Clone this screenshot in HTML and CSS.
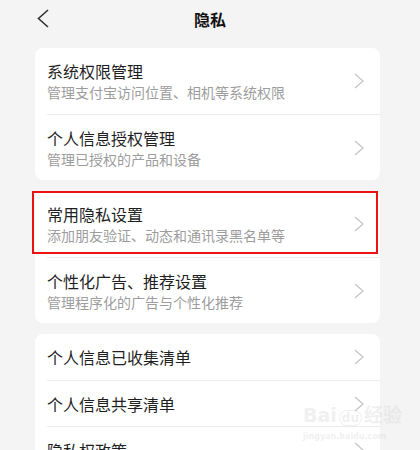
FILE: index.html
```html
<!DOCTYPE html>
<html lang="zh-CN">
<head>
  <meta charset="UTF-8" />
  <meta name="viewport" content="width=device-width, initial-scale=1.0" />
  <title>隐私</title>
  <link rel="stylesheet" href="styles.css">
</head>
<body>
  <div class="topbar">
    <svg class="back" width="12" height="19" viewBox="0 0 12 19">
      <polyline points="11,1 1.5,9.5 11,18" fill="none" stroke="#333" stroke-width="1.6" />
    </svg>
    <h1>隐私</h1>
  </div>

  <div class="list">
    <div class="card">
      <div class="row">
        <div class="texts">
          <div class="title">系统权限管理</div>
          <div class="sub">管理支付宝访问位置、相机等系统权限</div>
        </div>
        <svg class="arrow" width="10" height="16" viewBox="0 0 10 16"><polyline points="1,1 9,8 1,15" /></svg>
      </div>
      <div class="row">
        <div class="texts">
          <div class="title">个人信息授权管理</div>
          <div class="sub">管理已授权的产品和设备</div>
        </div>
        <svg class="arrow" width="10" height="16" viewBox="0 0 10 16"><polyline points="1,1 9,8 1,15" /></svg>
      </div>
    </div>

    <div class="card">
      <div class="row marked">
        <div class="texts">
          <div class="title">常用隐私设置</div>
          <div class="sub">添加朋友验证、动态和通讯录黑名单等</div>
        </div>
        <svg class="arrow" width="10" height="16" viewBox="0 0 10 16"><polyline points="1,1 9,8 1,15" /></svg>
      </div>
      <div class="row">
        <div class="texts">
          <div class="title">个性化广告、推荐设置</div>
          <div class="sub">管理程序化的广告与个性化推荐</div>
        </div>
        <svg class="arrow" width="10" height="16" viewBox="0 0 10 16"><polyline points="1,1 9,8 1,15" /></svg>
      </div>
    </div>

    <div class="card">
      <div class="row single">
        <div class="title">个人信息已收集清单</div>
        <svg class="arrow" width="10" height="16" viewBox="0 0 10 16"><polyline points="1,1 9,8 1,15" /></svg>
      </div>
      <div class="row single">
        <div class="title">个人信息共享清单</div>
        <svg class="arrow" width="10" height="16" viewBox="0 0 10 16"><polyline points="1,1 9,8 1,15" /></svg>
      </div>
      <div class="row single">
        <div class="title">隐私权政策</div>
        <svg class="arrow" width="10" height="16" viewBox="0 0 10 16"><polyline points="1,1 9,8 1,15" /></svg>
      </div>
    </div>
  </div>

  <div class="watermark">
    <div class="wm-logo">Bai<span class="wm-du">du</span>经验</div>
    <div class="wm-url">jingyan.baidu.com</div>
  </div>
</body>
</html>
```

FILE: styles.css
```css
body {
  margin: 0;
  background: #f4f4f4;
  font-family: "Noto Sans CJK SC", "Noto Sans", sans-serif;
  color: #1f1f1f;
  height: 450px;
  overflow: hidden;
  position: relative;
}

/* --- top bar --- */
.topbar {
  height: 38px;
  display: flex;
  align-items: center;
  justify-content: center;
  position: relative;
}
.topbar h1 {
  margin: 0;
  font-size: 16px;
  font-weight: bold;
  color: #111;
}
.back {
  position: absolute;
  left: 37px;
  top: 9px;
}

/* --- list --- */
.list {
  margin: 10px 0 0 35px;
  width: 345px;
  display: flex;
  flex-direction: column;
  gap: 11px;
}
.card {
  background: #fff;
  border-radius: 8px;
  padding-left: 12px;
}
.row {
  height: 66px;
  display: flex;
  align-items: center;
  justify-content: space-between;
  padding-right: 16px;
  border-top: 1px solid #ececec;
  box-sizing: border-box;
  position: relative;
}
.row:first-child {
  border-top: none;
}
.row.single {
  height: 46px;
}
.texts {
  display: flex;
  flex-direction: column;
}
.title {
  font-size: 16px;
  line-height: 22px;
  color: #1f1f1f;
}
.sub {
  font-size: 14px;
  line-height: 20px;
  color: #9d9d9d;
}
.arrow polyline {
  fill: none;
  stroke: #c6c6c6;
  stroke-width: 1.3;
}

/* red annotation frame */
.marked::after {
  content: "";
  position: absolute;
  left: -15px;
  right: 2px;
  top: 0;
  bottom: 3px;
  border: 2px solid #ee1111;
}

/* --- watermark --- */
.watermark {
  position: absolute;
  left: 303px;
  top: 405px;
  color: rgba(215, 215, 215, 0.4);
  pointer-events: none;
}
.wm-logo {
  font-family: "DejaVu Sans", sans-serif;
  font-size: 19px;
  font-weight: bold;
  line-height: 20px;
}
.wm-du {
  font-size: 12px;
  border: 1px solid rgba(215, 215, 215, 0.4);
  border-radius: 8px;
  padding: 0 2px;
  margin: 0 2px;
}
.wm-url {
  font-family: "DejaVu Sans", sans-serif;
  font-size: 8px;
  font-weight: bold;
  margin-top: 4px;
}
```
